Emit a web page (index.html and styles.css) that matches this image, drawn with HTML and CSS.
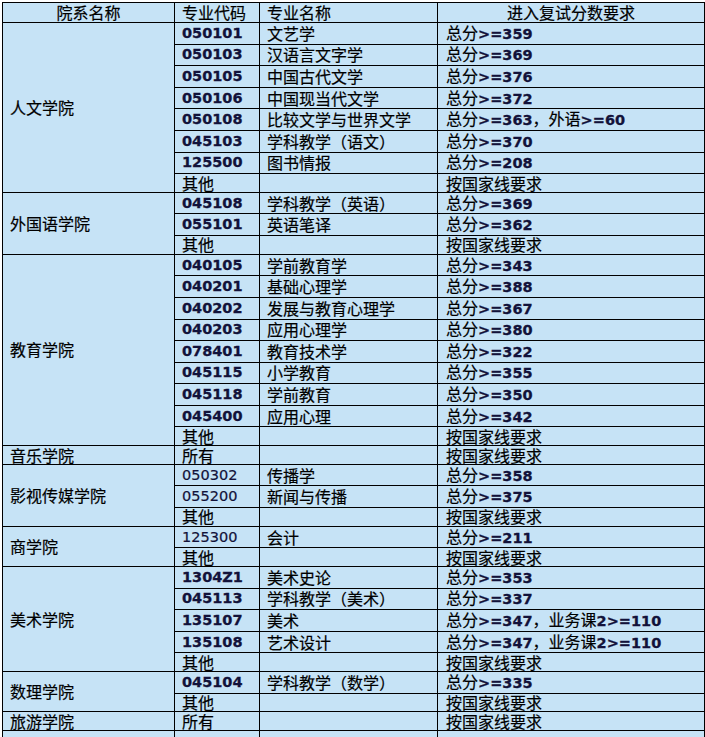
FILE: index.html
```html
<!DOCTYPE html>
<html lang="zh-CN">
<head>
<meta charset="utf-8">
<title>进入复试分数要求</title>
<link rel="stylesheet" href="styles.css">
</head>
<body>
<table class="scores">
  <colgroup>
    <col class="c1"><col class="c2"><col class="c3"><col class="c4">
  </colgroup>
  <thead>
    <tr class="head">
      <th class="center">院系名称</th>
      <th>专业代码</th>
      <th>专业名称</th>
      <th class="center">进入复试分数要求</th>
    </tr>
  </thead>
  <tbody>
    <tr class="n"><td class="college" rowspan="8">人文学院</td><td class="code">050101</td><td>文艺学</td><td>总分<b>&gt;=359</b></td></tr>
    <tr class="n"><td class="code">050103</td><td>汉语言文字学</td><td>总分<b>&gt;=369</b></td></tr>
    <tr class="n"><td class="code">050105</td><td>中国古代文学</td><td>总分<b>&gt;=376</b></td></tr>
    <tr class="n"><td class="code">050106</td><td>中国现当代文学</td><td>总分<b>&gt;=372</b></td></tr>
    <tr class="n"><td class="code">050108</td><td>比较文学与世界文学</td><td>总分<b>&gt;=363</b>，外语<b>&gt;=60</b></td></tr>
    <tr class="n"><td class="code">045103</td><td>学科教学（语文）</td><td>总分<b>&gt;=370</b></td></tr>
    <tr class="n"><td class="code">125500</td><td>图书情报</td><td>总分<b>&gt;=208</b></td></tr>
    <tr class="t"><td>其他</td><td></td><td>按国家线要求</td></tr>

    <tr class="n"><td class="college" rowspan="3">外国语学院</td><td class="code">045108</td><td>学科教学（英语）</td><td>总分<b>&gt;=369</b></td></tr>
    <tr class="n"><td class="code">055101</td><td>英语笔译</td><td>总分<b>&gt;=362</b></td></tr>
    <tr class="t"><td>其他</td><td></td><td>按国家线要求</td></tr>

    <tr class="n"><td class="college" rowspan="9">教育学院</td><td class="code">040105</td><td>学前教育学</td><td>总分<b>&gt;=343</b></td></tr>
    <tr class="n"><td class="code">040201</td><td>基础心理学</td><td>总分<b>&gt;=388</b></td></tr>
    <tr class="n"><td class="code">040202</td><td>发展与教育心理学</td><td>总分<b>&gt;=367</b></td></tr>
    <tr class="n"><td class="code">040203</td><td>应用心理学</td><td>总分<b>&gt;=380</b></td></tr>
    <tr class="n"><td class="code">078401</td><td>教育技术学</td><td>总分<b>&gt;=322</b></td></tr>
    <tr class="n"><td class="code">045115</td><td>小学教育</td><td>总分<b>&gt;=355</b></td></tr>
    <tr class="n"><td class="code">045118</td><td>学前教育</td><td>总分<b>&gt;=350</b></td></tr>
    <tr class="n"><td class="code">045400</td><td>应用心理</td><td>总分<b>&gt;=342</b></td></tr>
    <tr class="t"><td>其他</td><td></td><td>按国家线要求</td></tr>

    <tr class="t"><td class="college">音乐学院</td><td>所有</td><td></td><td>按国家线要求</td></tr>

    <tr class="n"><td class="college" rowspan="3">影视传媒学院</td><td class="code regular">050302</td><td>传播学</td><td>总分<b>&gt;=358</b></td></tr>
    <tr class="n"><td class="code regular">055200</td><td>新闻与传播</td><td>总分<b>&gt;=375</b></td></tr>
    <tr class="t"><td>其他</td><td></td><td>按国家线要求</td></tr>

    <tr class="n"><td class="college" rowspan="2">商学院</td><td class="code regular">125300</td><td>会计</td><td>总分<b>&gt;=211</b></td></tr>
    <tr class="t"><td>其他</td><td></td><td>按国家线要求</td></tr>

    <tr class="n"><td class="college" rowspan="5">美术学院</td><td class="code">1304Z1</td><td>美术史论</td><td>总分<b>&gt;=353</b></td></tr>
    <tr class="n"><td class="code">045113</td><td>学科教学（美术）</td><td>总分<b>&gt;=337</b></td></tr>
    <tr class="n"><td class="code">135107</td><td>美术</td><td>总分<b>&gt;=347</b>，业务课<b>2&gt;=110</b></td></tr>
    <tr class="n"><td class="code">135108</td><td>艺术设计</td><td>总分<b>&gt;=347</b>，业务课<b>2&gt;=110</b></td></tr>
    <tr class="t"><td>其他</td><td></td><td>按国家线要求</td></tr>

    <tr class="n"><td class="college" rowspan="2">数理学院</td><td class="code">045104</td><td>学科教学（数学）</td><td>总分<b>&gt;=335</b></td></tr>
    <tr class="t"><td>其他</td><td></td><td>按国家线要求</td></tr>

    <tr class="t"><td class="college">旅游学院</td><td>所有</td><td></td><td>按国家线要求</td></tr>

    <tr class="n"><td class="college"></td><td></td><td></td><td></td></tr>
  </tbody>
</table>
</body>
</html>
```
FILE: styles.css
```css
html, body {
  margin: 0;
  padding: 0;
  background: #ffffff;
}

body {
  padding: 2px 0 0 2px;
  overflow: hidden;
}

.scores {
  table-layout: fixed;
  border-collapse: collapse;
  width: 702px;
  background: #c6e3f6;
  font-family: "Noto Sans CJK SC", "Noto Sans", sans-serif;
  font-size: 16px;
  line-height: 17px;
  color: #000000;
  -webkit-text-stroke: 0.2px #000000;
}

.c1 { width: 172px; }
.c2 { width: 85px; }
.c3 { width: 178px; }
.c4 { width: 267px; }

.scores th,
.scores td {
  border: 1px solid #000000;
  padding: 0 0 0 7px;
  text-align: left;
  vertical-align: middle;
  font-weight: normal;
  white-space: nowrap;
}

.scores td:last-child {
  padding-left: 8px;
}

.scores th.center {
  text-align: center;
  padding-left: 0;
}

.head { height: 20px; }
.n { height: 21.6px; }
.t { height: 18.7px; }

.scores td.college {
  padding-left: 7px;
}

.scores td.code,
.scores b {
  font-family: "DejaVu Sans", Verdana, sans-serif;
  font-weight: bold;
  font-size: 14.5px;
  color: #12123a;
  -webkit-text-stroke: 0.3px #12123a;
}

.scores td.code.regular {
  font-weight: normal;
  -webkit-text-stroke: 0.2px #12123a;
}
```
